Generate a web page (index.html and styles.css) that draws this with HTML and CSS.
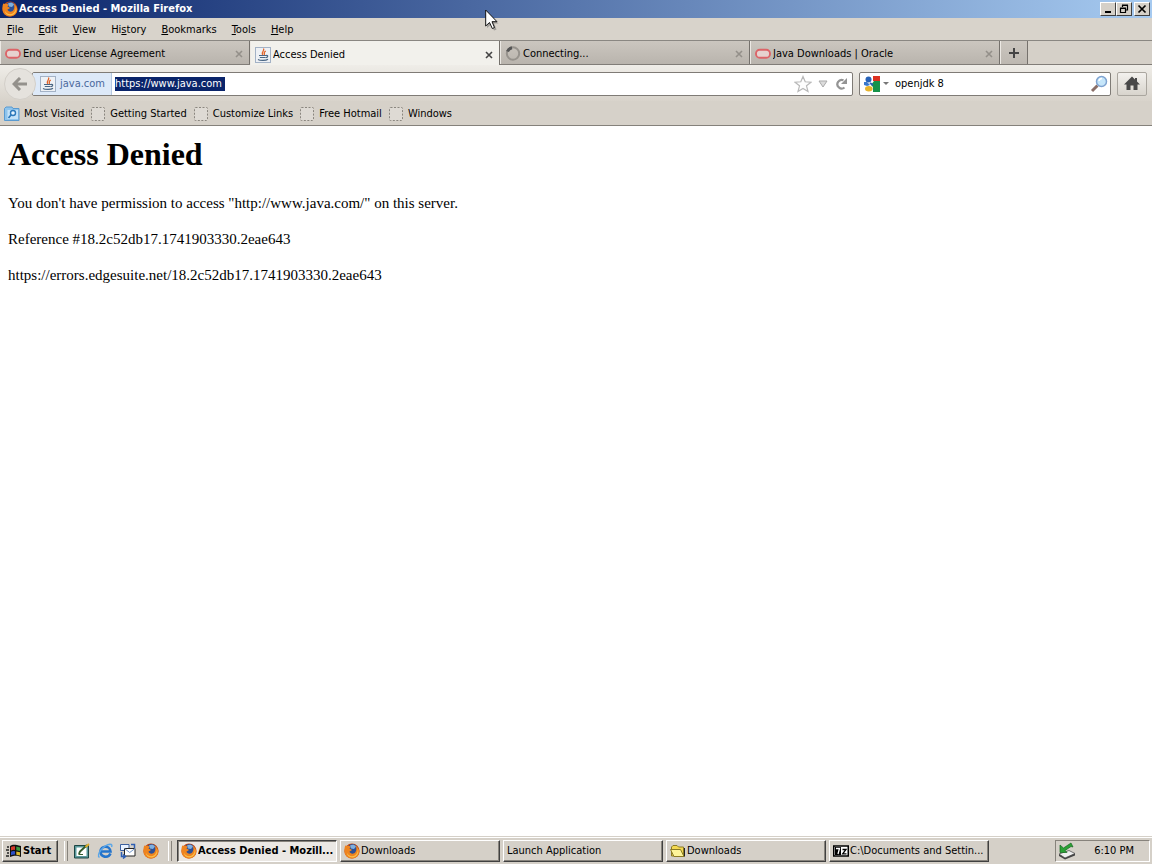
FILE: index.html
```html
<!DOCTYPE html>
<html lang="en">
<head>
<meta charset="utf-8">
<title>Access Denied - Mozilla Firefox</title>
<link rel="stylesheet" href="styles.css">
</head>
<body>
<svg class="sprite" aria-hidden="true">
  <defs>
    <symbol id="firefox" viewBox="0 0 16 16">
      <circle cx="8" cy="8" r="7.6" fill="#c9460c"/>
      <circle cx="8.4" cy="6.6" r="5.6" fill="#2c4f96"/>
      <path d="M6 2.500C8 1 11 1.500 12 3.500L10 6 7 5.500Z" fill="#7eb0e0"/>
      <path d="M1.200 2.500C2 3 3 3 4 2.800 5 2.600 6 3 6.500 4L5.500 6C7 6 8 6.500 7.500 7.500L5.500 8.500C6 11 10 11.500 11.500 9 12.800 7 12.500 4.500 11.500 2.500 15 4.500 16.500 9 14 12.500 11 16.500 4 16.500 1.500 12 0 9 .2 5.500 1.200 2.500Z" fill="#ee8420"/>
      <path d="M13.500 5C14.500 8 13 12 9.500 13 7 13.600 4 12.500 3 10 3 14 8 15.500 11.500 13.500 14.500 11.500 15 8 13.500 5Z" fill="#f9c04a"/>
    </symbol>
    <symbol id="oracle" viewBox="0 0 16 16">
      <rect x="1" y="3.800" width="14" height="8" rx="3.800" fill="#e6d2cf" stroke="#dc6468" stroke-width="1.900"/>
    </symbol>
    <symbol id="java" viewBox="0 0 16 16">
      <rect x=".5" y=".5" width="15" height="15" fill="#eef1f5" stroke="#a3b2c6"/>
      <path d="M8.500 1.500C10 4 6 4.500 7.600 8M10.800 4C8.500 5 9 6.200 9.500 8" fill="none" stroke="#e2652b" stroke-width="1.300"/>
      <path d="M4 8.500H11M4.800 10.500H10.500M11 8.500C13.500 8 13 10.500 10.800 10.700M3 12.500C5 13.800 11 13.800 13 12.300" fill="none" stroke="#4a6684" stroke-width="1.200"/>
    </symbol>
    <symbol id="cross" viewBox="0 0 8 8">
      <path d="M1 1L7 7M7 1L1 7" fill="none" stroke="currentColor" stroke-width="1.600"/>
    </symbol>
    <symbol id="blank" viewBox="0 0 14 14">
      <rect x=".5" y=".5" width="13" height="13" rx="1" fill="#dedad4" stroke="#8a867f" stroke-dasharray="2 1.500"/>
    </symbol>
  </defs>
</svg>

<div class="desktop">
  <header class="titlebar">
    <svg class="i16"><use href="#firefox"/></svg>
    <span class="titlebar-text">Access Denied - Mozilla Firefox</span>
    <div class="window-buttons">
      <button class="win-btn" aria-label="Minimize"><svg viewBox="0 0 12 10"><path d="M3 8H9" stroke="#000" stroke-width="2"/></svg></button>
      <button class="win-btn" aria-label="Restore"><svg viewBox="0 0 12 10"><path d="M4.500 3V1.500H9.500V6H8M4 1H10M2.500 4.500H7.500V8.500H2.500ZM2 4H8" fill="none" stroke="#000" stroke-width="1.200"/></svg></button>
      <button class="win-btn win-close" aria-label="Close"><svg viewBox="0 0 12 10"><path d="M2.500 1.500L9.500 8.500M9.500 1.500L2.500 8.500" stroke="#000" stroke-width="1.700"/></svg></button>
    </div>
    <svg class="pointer" viewBox="0 0 14 22"><path d="M2 3V19L6 15.500 9 21.500 11.500 20.500 9 14.500H13.500Z" fill="#666" opacity=".5"/><path d="M.7 1V17L4.500 13.500 7.300 19.500 9.500 18.500 7 12.700H12Z" fill="#fff" stroke="#111"/></svg>
  </header>

  <nav class="menubar" aria-label="Menu">
    <button><u>F</u>ile</button>
    <button><u>E</u>dit</button>
    <button><u>V</u>iew</button>
    <button>Hi<u>s</u>tory</button>
    <button><u>B</u>ookmarks</button>
    <button><u>T</u>ools</button>
    <button><u>H</u>elp</button>
  </nav>

  <div class="tabs">
    <div class="tab">
      <svg class="i16"><use href="#oracle"/></svg><button class="tab-label">End user License Agreement</button>
      <button class="tab-close" aria-label="Close tab"><svg><use href="#cross"/></svg></button>
    </div>
    <div class="tab tab-active">
      <svg class="i16"><use href="#java"/></svg><button class="tab-label">Access Denied</button>
      <button class="tab-close" aria-label="Close tab"><svg><use href="#cross"/></svg></button>
    </div>
    <div class="tab">
      <svg class="i16" viewBox="0 0 16 16"><circle cx="8" cy="7.500" r="6.200" fill="none" stroke="#96928c" stroke-width="2"/><path d="M2.500 5.500A6 6 0 0 1 7 1.700" fill="none" stroke="#555" stroke-width="3"/></svg><button class="tab-label">Connecting...</button>
      <button class="tab-close" aria-label="Close tab"><svg><use href="#cross"/></svg></button>
    </div>
    <div class="tab">
      <svg class="i16"><use href="#oracle"/></svg><button class="tab-label">Java Downloads | Oracle</button>
      <button class="tab-close" aria-label="Close tab"><svg><use href="#cross"/></svg></button>
    </div>
    <button class="tab-new" aria-label="New tab"><svg viewBox="0 0 12 12"><path d="M6 1V11M1 6H11" stroke="#444" stroke-width="2"/></svg></button>
  </div>

  <div class="toolbar">
    <button class="back" aria-label="Back"><svg viewBox="0 0 16 14"><path d="M8 1L2 7 8 13M2 7H15" fill="none" stroke="#94918c" stroke-width="3"/></svg></button>
    <div class="urlbar">
      <div class="identity"><svg class="i16"><use href="#java"/></svg><span>java.com</span></div>
      <input class="url" type="text" aria-label="Address" value="https://www.java.com">
      <div class="url-actions">
        <button aria-label="Bookmark this page"><svg width="18" height="18" viewBox="0 0 18 18"><path d="M9 1.500L11.200 6.800 17 7.200 12.500 10.800 14 16.500 9 13.400 4 16.500 5.500 10.800 1 7.200 6.800 6.800Z" fill="#fdfdfd" stroke="#b8b8b8" stroke-width="1.200"/></svg></button>
        <button aria-label="Show history"><svg width="10" height="8" viewBox="0 0 10 8"><path d="M1 1H9L5 7Z" fill="#dcdcdc" stroke="#aaa"/></svg></button>
        <button aria-label="Reload"><svg width="14" height="14" viewBox="0 0 14 14"><path d="M9.500 3.300A4.300 4.300 0 1 0 10.500 10.500" fill="none" stroke="#949494" stroke-width="2.200"/><path d="M13 1V7H7Z" fill="#949494"/></svg></button>
      </div>
    </div>
    <div class="searchbar">
      <button aria-label="Search engine" class="engine"><svg class="i16" viewBox="0 0 16 16"><rect x="0" y="0" width="16" height="16" fill="#fff"/><path d="M9 0H16V5H9Z" fill="#dc3020"/><path d="M10 5H16V16H9V11L7 9Z" fill="#16934a"/><circle cx="4.500" cy="3.500" r="3" fill="#2762b8"/><path d="M0 6H3L6 9 3 10 0 9Z" fill="#3a78cc"/><ellipse cx="4.800" cy="12.800" rx="3.800" ry="2.700" fill="#e8b42c"/><path d="M6 7L9 9" stroke="#2762b8" stroke-width="2"/></svg><svg width="6" height="4" viewBox="0 0 6 4"><path d="M0 0H6L3 3Z" fill="#777"/></svg></button>
      <input class="search" type="text" aria-label="Search" value="openjdk 8">
      <button aria-label="Search"><svg width="18" height="18" viewBox="0 0 18 18"><path d="M2 16L7.500 10.500" stroke="#8a6f68" stroke-width="3"/><circle cx="11.500" cy="6.500" r="5" fill="#c6e6fa" stroke="#7fa3d0" stroke-width="1.500"/><path d="M9 6A3 3 0 0 1 12 3.500" fill="none" stroke="#fff" stroke-width="1.500"/></svg></button>
    </div>
    <button class="home" aria-label="Home"><svg width="16" height="15" viewBox="0 0 16 15"><path d="M8 .5L0 8.500H2.500V14H6.500V9.500H9.500V14H13.500V8.500H16L13 5.500V2H11V3.500Z" fill="#484848"/></svg></button>
  </div>

  <nav class="bookmarks" aria-label="Bookmarks">
    <a href="#"><svg class="i16" viewBox="0 0 16 16"><path d="M.5 2.500L2 1H8L9 2.500H15V14.500H.5Z" fill="#8fc4ec" stroke="#5a9ad0"/><path d="M3.500 4H14V13H3.500Z" fill="#c4e2f8"/><circle cx="9" cy="7" r="2.500" fill="#e8f5ff" stroke="#2c78ba" stroke-width="1.400"/><path d="M7 9L4.500 12" stroke="#2c78ba" stroke-width="1.700"/></svg>Most Visited</a>
    <a href="#"><svg class="i14"><use href="#blank"/></svg>Getting Started</a>
    <a href="#"><svg class="i14"><use href="#blank"/></svg>Customize Links</a>
    <a href="#"><svg class="i14"><use href="#blank"/></svg>Free Hotmail</a>
    <a href="#"><svg class="i14"><use href="#blank"/></svg>Windows</a>
  </nav>

  <main class="page">
    <h1>Access Denied</h1>
    <p>You don't have permission to access "http://www.java.com/" on this server.</p>
    <p>Reference #18.2c52db17.1741903330.2eae643</p>
    <p>https://errors.edgesuite.net/18.2c52db17.1741903330.2eae643</p>
  </main>

  <footer class="taskbar">
    <button class="start"><svg class="i16" viewBox="0 0 16 16"><path d="M1 4H3M0 7H3M1 10H3M0 13H3" stroke="#222" stroke-width="1.500"/><path d="M4 3C7 1 9 1.500 15 3V14C11 12 8 12.500 4 14Z" fill="#111"/><path d="M5 4Q7 2.800 9 3.300V7Q7 6.500 5 7.500Z" fill="#d23a2c"/><path d="M10.300 3.500L14 4.400V8L10.300 7.200Z" fill="#3b9a42"/><path d="M5 8.700Q7 7.700 9 8.200V11.500Q7 11.200 5 12.200Z" fill="#2d50c8"/><path d="M10.300 8.400L14 9.200V12.500L10.300 11.700Z" fill="#dfbb2c"/></svg>Start</button>
    <div class="grip"></div>
    <div class="quick">
      <button aria-label="Show desktop"><svg class="i16" viewBox="0 0 16 16"><path d="M.5 2.500H14.500V15H.5Z" fill="#5b9a9c" stroke="#1d4543"/><path d="M2.500 4.500H12.500V13H2.500Z" fill="#fff"/><path d="M5 11L6 8.500 13 2" fill="none" stroke="#345c2c" stroke-width="2"/><path d="M4.500 11.500H9" stroke="#345c2c"/><path d="M11.500 4L15 1" stroke="#dcaa28" stroke-width="2"/></svg></button>
      <button aria-label="Internet Explorer"><svg class="i16" viewBox="0 0 16 16"><path d="M13.500 10.500C11 16 3.500 14 3.500 8.500 3.500 2.500 13 2 13.500 8.500H4" fill="none" stroke="#2474cc" stroke-width="2.600"/><path d="M2.500 14.500C-1.500 12 7 1.500 13 1.200 15 1.200 15.300 2.500 14.500 4" fill="none" stroke="#5aa6e8" stroke-width="1.400"/></svg></button>
      <button aria-label="Mail"><svg class="i16" viewBox="0 0 16 16"><path d="M.5 1.500H9V7.500H.5Z" fill="#e8f1ff" stroke="#3b5f9e"/><path d="M4.500 5.500H15V13H4.500Z" fill="#fff" stroke="#222"/><path d="M4.500 5.500L9.700 9.500 15 5.500" fill="none" stroke="#7094c8"/><path d="M11 1.500H14.500V5M1.500 9V13.500H5M3 11.500L5.500 13.500 3 15.500" fill="none" stroke="#2d5eb4" stroke-width="1.500"/></svg></button>
      <button aria-label="Firefox"><svg class="i16"><use href="#firefox"/></svg></button>
    </div>
    <div class="grip"></div>
    <div class="tasks">
      <button class="task task-active"><svg class="i16"><use href="#firefox"/></svg><span>Access Denied - Mozill...</span></button>
      <button class="task"><svg class="i16"><use href="#firefox"/></svg><span>Downloads</span></button>
      <button class="task"><span>Launch Application</span></button>
      <button class="task"><svg class="i16" viewBox="0 0 16 16"><path d="M1.500 4L3 2.500H7L8.500 4H13.500V13H1.500Z" fill="#f3d851" stroke="#8a7a24"/><path d="M.5 6.500H10.500L14 13.500H4Z" fill="#fdf49a" stroke="#8a7a24"/><path d="M14.500 5V13.500" stroke="#222"/></svg><span>Downloads</span></button>
      <button class="task"><svg class="i16" viewBox="0 0 16 16"><path d="M.75 3H15.250V13H.75Z" fill="#fff" stroke="#000" stroke-width="1.500"/><path d="M2 4H8V12H2Z"/><path d="M3 5.500H6.500L5 11" fill="none" stroke="#fff" stroke-width="1.300"/><path d="M9.500 6.500H13L9.700 10.800H13.500" fill="none" stroke="#000" stroke-width="1.300"/></svg><span>C:\Documents and Settin...</span></button>
    </div>
    <div class="tray">
      <svg class="tray-icon" viewBox="0 0 18 18"><path d="M1 12L11 8.500 17 11.500 7 16Z" fill="#eee" stroke="#555" stroke-width=".8"/><path d="M1 12V14L7 17.500 17 13.500V11.500L7 16Z" fill="#444"/><path d="M2 3V10.500H9L7 8.500 13 4.500 15 5 13 1 5.500 6Z" fill="#2ba235" stroke="#17691f" stroke-width=".7"/></svg>
      <time>6:10 PM</time>
    </div>
  </footer>
</div>
</body>
</html>
```
FILE: styles.css
```css
* { box-sizing: border-box; }
body {
  margin: 0;
  font: 11px/14px "DejaVu Sans Condensed", "Liberation Sans", sans-serif;
  color: #000;
  background: #d5d0c8;
}
button {
  margin: 0;
  padding: 0;
  border: 0;
  background: none;
  color: inherit;
  font: inherit;
  white-space: nowrap;
}
input { font: inherit; color: inherit; border: 0; padding: 0; outline: 0; min-width: 0; }
svg { display: block; flex: none; }
.sprite { position: absolute; width: 0; height: 0; }
.i16 { width: 16px; height: 16px; }
.i14 { width: 14px; height: 14px; }
.desktop { min-height: 100vh; display: flex; flex-direction: column; }

.titlebar {
  position: relative;
  display: flex;
  align-items: center;
  height: 18px;
  padding: 0 2px;
  background: linear-gradient(90deg, #0a246a, #a6caf0);
  color: #fff;
  font-weight: bold;
}
.titlebar-text { flex: 1; padding-left: 1px; }
.window-buttons { display: flex; }
.win-btn {
  width: 16px;
  height: 14px;
  padding: 1px;
  background: #d5d0c8;
  border: 1px solid;
  border-color: #fff #404040 #404040 #fff;
}
.win-btn svg { width: 12px; height: 10px; }
.win-close { margin-left: 2px; }
.pointer { position: absolute; left: 485px; top: 9px; width: 14px; height: 22px; z-index: 2; }

.menubar {
  display: flex;
  gap: 15px;
  height: 22px;
  padding: 1px 7px 0;
  align-items: center;
  background: #d8d3cb;
}

.tabs {
  display: flex;
  height: 25px;
  border-top: 1px solid #8a8782;
  border-bottom: 1px solid #817d78;
  background: #d5d0c8;
}
.tab {
  flex: 0 1 250px;
  min-width: 0;
  display: flex;
  align-items: center;
  gap: 2px;
  padding: 3px 6px 0 4px;
  border-right: 1px solid #75716c;
  border-left: 1px solid #ece9e4;
  background: linear-gradient(#cbc6bf, #b9b4ad);
}
.tab-label { flex: 1; min-width: 0; text-align: left; overflow: hidden; }
.tab-close { color: #94908a; }
.tab-close svg { width: 8px; height: 8px; }
.tab-active { background: #f2f1ec; margin-bottom: -1px; }
.tab-active .tab-close { color: #444; }
.tab-new {
  width: 28px;
  display: grid;
  place-items: center;
  background: linear-gradient(#cbc6bf, #bdb8b1);
  border-left: 1px solid #ece9e4;
  border-right: 1px solid #75716c;
}
.tab-new svg { width: 12px; height: 12px; }

.toolbar {
  display: flex;
  align-items: center;
  height: 36px;
  padding: 1px 5px 0 4px;
  background: linear-gradient(#efede8, #d8d3cb);
}
.back {
  z-index: 1;
  width: 32px;
  height: 32px;
  margin-right: -4px;
  border-radius: 50%;
  border: 1px solid #d3cfc9;
  background: #e5e2dd;
  display: grid;
  place-items: center;
}
.back svg { width: 16px; height: 14px; }
.urlbar, .searchbar {
  display: flex;
  align-items: center;
  height: 24px;
  background: #fff;
  border: 1px solid #7f7b76;
  border-radius: 2px;
}
.urlbar { flex: 819; margin-right: 6px; }
.identity {
  display: flex;
  align-items: center;
  gap: 4px;
  height: 22px;
  padding: 0 6px 0 7px;
  background: #dde9f8;
  border-right: 1px solid #b5c8e0;
  color: #4a689c;
}
.url {
  margin-left: 3px;
  width: 110px;
  height: 14px;
  background: #0a246a;
  color: #fff;
}
.url-actions { margin-left: auto; display: flex; align-items: center; gap: 6px; padding-right: 4px; }
.searchbar { flex: 244; padding: 0 2px 0 4px; }
.engine { display: flex; align-items: center; gap: 3px; }
.search { flex: 1; margin-left: 6px; height: 16px; background: transparent; }
.home {
  width: 30px;
  height: 24px;
  margin-left: 6px;
  border: 1px solid #aaa69f;
  border-radius: 2px;
  background: linear-gradient(#f3f1ee, #d8d4cd);
  display: grid;
  place-items: center;
}

.bookmarks {
  display: flex;
  align-items: center;
  gap: 7px;
  height: 25px;
  padding: 2px 4px 0;
  border-bottom: 1px solid #85817b;
  background: #d6d1c9;
}
.bookmarks a { display: flex; align-items: center; gap: 5px; color: inherit; text-decoration: none; white-space: nowrap; }
.bookmarks a:first-child { gap: 4px; }

.page {
  flex: 1;
  padding: 0 8px;
  background: #fff;
  font: 15px/20px "Liberation Serif", "Times New Roman", serif;
}
.page h1 { margin: 10px 0 21px; font-size: 32px; line-height: 36px; }
.page p { margin: 0 0 16px; }

.taskbar {
  display: flex;
  align-items: center;
  height: 28px;
  padding: 1px 2px;
  background: #d5d0c8;
  border-top: 1px solid #d5d0c8;
  box-shadow: inset 0 1px #fff;
}
.start, .task {
  display: flex;
  align-items: center;
  height: 22px;
  border: 1px solid;
  border-color: #fff #404040 #404040 #fff;
  box-shadow: inset -1px -1px #87837c;
}
.start { width: 56px; padding: 0 3px; gap: 1px; font-weight: bold; }
.grip {
  width: 4px;
  height: 20px;
  margin-left: 6px;
  border-left: 1px solid #fff;
  border-right: 1px solid #87837c;
}
.quick { display: flex; gap: 7px; margin: 0 3px 0 6px; }
.tasks { flex: 1; display: flex; gap: 3px; margin-left: 5px; min-width: 0; }
.task { flex: 0 1 160px; min-width: 0; padding: 0 3px; gap: 1px; }
.task span { overflow: hidden; }
.task-active {
  font-weight: bold;
  border-color: #404040 #fff #fff #404040;
  box-shadow: inset 1px 1px #87837c;
  background: #ebe8e4;
}
.tray {
  display: flex;
  align-items: center;
  gap: 18px;
  height: 22px;
  padding: 0 15px 0 2px;
  border: 1px solid;
  border-color: #87837c #fff #fff #87837c;
}
.tray-icon { width: 18px; height: 18px; }
```
